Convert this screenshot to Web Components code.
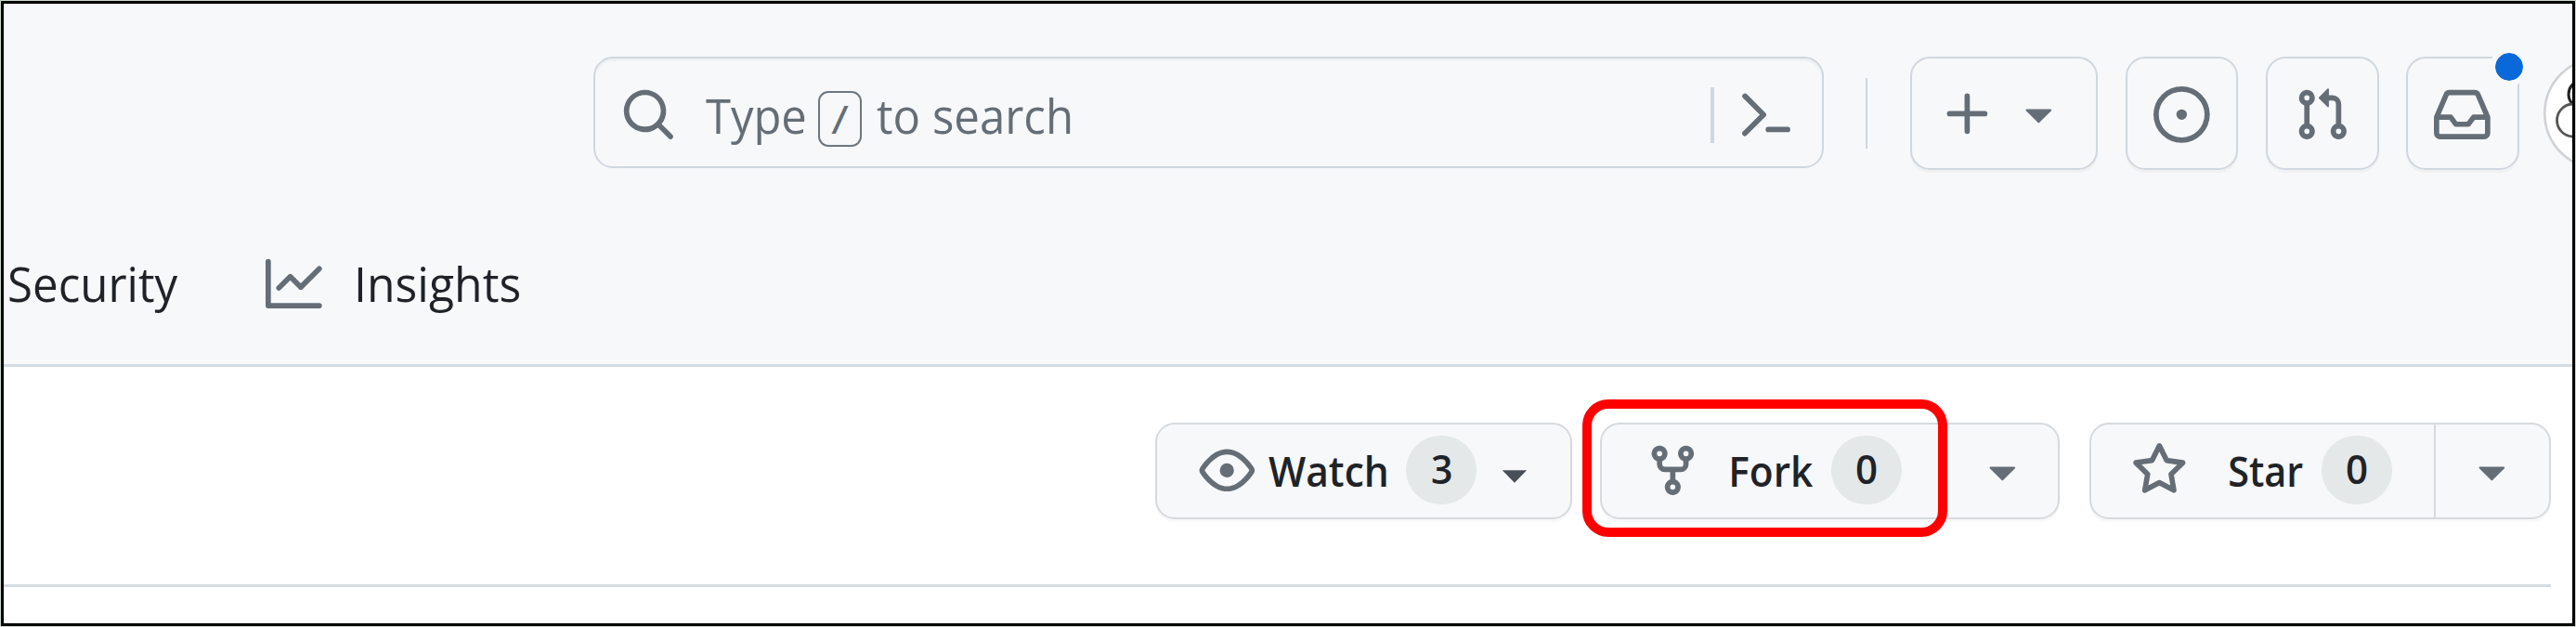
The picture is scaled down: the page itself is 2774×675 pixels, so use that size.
<!DOCTYPE html>
<html lang="en">
<head>
<meta charset="utf-8">
<title>Repository</title>
<style>
html,body{margin:0;padding:0;background:#fff}
body{width:2774px;height:675px;overflow:hidden;font-family:"Open Sans","Noto Sans",sans-serif;color:#1f2328}
</style>
</head>
<body>
<repo-page></repo-page>
<script>
const define = (name, html, setup) => {
  const t = document.createElement('template');
  t.innerHTML = html;
  customElements.define(name, class extends HTMLElement {
    connectedCallback() {
      if (this.shadowRoot) return;
      this.attachShadow({mode: 'open'}).append(t.content.cloneNode(true));
      if (setup) setup.call(this, this.shadowRoot);
    }
  });
};

const ICONS = {
  graph: 'M1.5 1.75V13.5h13.75a.75.75 0 0 1 0 1.5H.75a.75.75 0 0 1-.75-.75V1.75a.75.75 0 0 1 1.5 0Zm14.28 2.53-5.25 5.25a.75.75 0 0 1-1.06 0L7 7.06 4.28 9.78a.751.751 0 0 1-1.042-.018.751.751 0 0 1-.018-1.042l3.25-3.25a.75.75 0 0 1 1.06 0L10 7.94l4.72-4.72a.751.751 0 0 1 1.042.018.751.751 0 0 1 .018 1.042Z',
  search: 'M10.68 11.74a6 6 0 0 1-7.922-8.982 6 6 0 0 1 8.982 7.922l3.04 3.04a.749.749 0 0 1-.326 1.275.749.749 0 0 1-.734-.215ZM11.5 7a4.499 4.499 0 1 0-8.997 0A4.499 4.499 0 0 0 11.5 7Z',
  terminal: 'm6.354 8.04-4.773 4.773a.75.75 0 1 0 1.061 1.06L7.945 8.57a.75.75 0 0 0 0-1.06L2.642 2.206a.75.75 0 0 0-1.06 1.061L6.353 8.04ZM8.75 11.5a.75.75 0 0 0 0 1.5h5.5a.75.75 0 0 0 0-1.5h-5.5Z',
  plus: 'M7.75 2a.75.75 0 0 1 .75.75V7h4.25a.75.75 0 0 1 0 1.5H8.5v4.25a.75.75 0 0 1-1.5 0V8.5H2.75a.75.75 0 0 1 0-1.5H7V2.75A.75.75 0 0 1 7.75 2Z',
  caret: 'm4.427 7.427 3.396 3.396a.25.25 0 0 0 .354 0l3.396-3.396A.25.25 0 0 0 11.396 7H4.604a.25.25 0 0 0-.177.427Z',
  issue: 'M8 9.5a1.5 1.5 0 1 0 0-3 1.5 1.5 0 0 0 0 3ZM8 0a8 8 0 1 1 0 16A8 8 0 0 1 8 0ZM1.5 8a6.5 6.5 0 1 0 13 0 6.5 6.5 0 0 0-13 0Z',
  pull: 'M1.5 3.25a2.25 2.25 0 1 1 3 2.122v5.256a2.251 2.251 0 1 1-1.5 0V5.372A2.25 2.25 0 0 1 1.5 3.25Zm5.677-.177L9.573.677A.25.25 0 0 1 10 .854V2.5h1A2.5 2.5 0 0 1 13.5 5v5.628a2.251 2.251 0 1 1-1.5 0V5a1 1 0 0 0-1-1h-1v1.646a.25.25 0 0 1-.427.177L7.177 3.427a.25.25 0 0 1 0-.354ZM3.75 2.5a.75.75 0 1 0 0 1.5.75.75 0 0 0 0-1.5Zm0 9.5a.75.75 0 1 0 0 1.5.75.75 0 0 0 0-1.5Zm8.25.75a.75.75 0 1 0 1.5 0 .75.75 0 0 0-1.5 0Z',
  inbox: 'M2.8 2.06A1.75 1.75 0 0 1 4.41 1h7.18c.7 0 1.333.417 1.61 1.06l2.74 6.395c.04.093.06.194.06.295v4.5A1.75 1.75 0 0 1 14.25 15H1.75A1.75 1.75 0 0 1 0 13.25v-4.5c0-.101.02-.202.06-.295Zm1.61.44a.25.25 0 0 0-.23.152L1.887 8H4.75a.75.75 0 0 1 .6.3L6.625 10h2.75l1.275-1.7a.75.75 0 0 1 .6-.3h2.863L11.82 2.652a.25.25 0 0 0-.23-.152Zm10.09 7h-2.875l-1.275 1.7a.75.75 0 0 1-.6.3h-3.5a.75.75 0 0 1-.6-.3L4.375 9.5H1.5v3.75c0 .138.112.25.25.25h12.5a.25.25 0 0 0 .25-.25Z',
  eye: 'M8 2c1.981 0 3.671.992 4.933 2.078 1.27 1.091 2.187 2.345 2.637 3.023a1.62 1.62 0 0 1 0 1.798c-.45.678-1.367 1.932-2.637 3.023C11.67 13.008 9.981 14 8 14c-1.981 0-3.671-.992-4.933-2.078C1.797 10.83.88 9.576.43 8.898a1.62 1.62 0 0 1 0-1.798c.45-.677 1.367-1.931 2.637-3.022C4.33 2.992 6.019 2 8 2ZM1.679 7.932a.12.12 0 0 0 0 .136c.411.622 1.241 1.75 2.366 2.717C5.176 11.758 6.527 12.5 8 12.5c1.473 0 2.825-.742 3.955-1.715 1.124-.967 1.954-2.096 2.366-2.717a.12.12 0 0 0 0-.136c-.412-.621-1.242-1.75-2.366-2.717C10.824 4.242 9.473 3.5 8 3.5c-1.473 0-2.825.742-3.955 1.715-1.124.967-1.954 2.096-2.366 2.717ZM8 10a2 2 0 1 1-.001-3.999A2 2 0 0 1 8 10Z',
  fork: 'M5 5.372v.878c0 .414.336.75.75.75h4.5a.75.75 0 0 0 .75-.75v-.878a2.25 2.25 0 1 1 1.5 0v.878a2.25 2.25 0 0 1-2.25 2.25h-1.5v2.128a2.251 2.251 0 1 1-1.5 0V8.5h-1.5A2.25 2.25 0 0 1 3.5 6.25v-.878a2.25 2.25 0 1 1 1.5 0ZM5 3.25a.75.75 0 1 0-1.5 0 .75.75 0 0 0 1.5 0Zm6.75.75a.75.75 0 1 0 0-1.5.75.75 0 0 0 0 1.5Zm-3 8.75a.75.75 0 1 0-1.5 0 .75.75 0 0 0 1.5 0Z',
  star: 'M8 .25a.75.75 0 0 1 .673.418l1.882 3.815 4.21.612a.75.75 0 0 1 .416 1.279l-3.046 2.97.719 4.192a.751.751 0 0 1-1.088.791L8 12.347l-3.766 1.98a.75.75 0 0 1-1.088-.79l.72-4.194L.818 6.374a.75.75 0 0 1 .416-1.28l4.21-.611L7.327.668A.75.75 0 0 1 8 .25Zm0 2.445L6.615 5.5a.75.75 0 0 1-.564.41l-3.097.45 2.24 2.184a.75.75 0 0 1 .216.664l-.528 3.084 2.769-1.456a.75.75 0 0 1 .698 0l2.77 1.456-.53-3.084a.75.75 0 0 1 .216-.664l2.24-2.183-3.096-.45a.75.75 0 0 1-.564-.41L8 2.694Z'
};

define('oct-icon', `<style>:host{display:block;flex:none;width:60.7px;height:60.7px;color:#656d76}svg{display:block;width:100%;height:100%;overflow:visible}</style>
<svg viewBox="0 0 16 16" fill="currentColor" aria-hidden="true"><path fill-rule="evenodd"/></svg>`, function (r) {
  r.querySelector('path').setAttribute('d', ICONS[this.getAttribute('name')]);
});

/* A label whose inked width is exactly its "w" attribute. */
define('ink-text', `<style>:host{display:block;flex:none;line-height:70px;height:70px;white-space:nowrap}span{display:inline-block;transform-origin:0 50%}</style><span></span>`, function (r) {
  const s = r.querySelector('span'), w = +this.getAttribute('w');
  s.textContent = this.getAttribute('label');
  this.style.width = w + 'px';
  const cs = getComputedStyle(this), c = document.createElement('canvas').getContext('2d');
  c.font = `${cs.fontWeight} ${cs.fontSize} ${cs.fontFamily}`;
  const m = c.measureText(s.textContent);
  const k = w / (m.actualBoundingBoxLeft + m.actualBoundingBoxRight);
  s.style.transform = `scaleX(${k}) translateX(${m.actualBoundingBoxLeft}px)`;
});

define('search-box', `<style>
:host{display:flex;flex:none;align-items:center;box-sizing:border-box;width:1324.5px;height:120px;padding-top:5px;border:2px solid #d0d7de;border-radius:21px;box-shadow:inset 0 3px 0 rgba(208,215,222,.2);font-size:51px;color:#656d76}
kbd{display:flex;flex:none;align-items:center;box-sizing:border-box;width:46.3px;height:60px;margin:8px 0 0 15.4px;border:2px solid #6e7781;border-radius:11px;font:42px "Open Sans",sans-serif}
i{flex:none;width:4px;height:60px;margin-left:689.3px;background:#d0d7de}
</style>
<oct-icon name="search" style="margin-left:27.2px"></oct-icon>
<ink-text label="Type" w="106.3" style="margin-left:30.9px"></ink-text>
<kbd><ink-text label="/" w="18.5" style="margin-left:12px"></ink-text></kbd>
<ink-text label="to search" w="208.9" style="margin-left:16.1px"></ink-text>
<i></i>
<oct-icon name="terminal" style="margin-left:25px;margin-top:-1px"></oct-icon>`);

define('header-button', `<style>
:host{position:relative;display:flex;flex:none;align-items:center;justify-content:center;box-sizing:border-box;width:121.5px;height:122px;padding-top:3px;border:2px solid #d0d7de;border-radius:21px;box-shadow:0 3px 0 rgba(31,35,40,.03)}
</style><slot></slot>`);

define('unread-dot', `<style>:host{position:absolute;top:-12px;right:-12px;width:30px;height:30px;border:6px solid #f6f8fa;border-radius:50%;background:#0969da;background-clip:padding-box}</style>`);

define('user-avatar', `<style>:host{display:block;flex:none;width:122px;height:122px;margin-left:26px}svg{display:block}</style>
<svg width="122" height="122" viewBox="0 0 122 122" fill="none">
<circle cx="61" cy="61" r="59.7" fill="#fff" stroke="#d0d2d5" stroke-width="2.6"/>
<ellipse cx="40" cy="40.5" rx="13" ry="14" stroke="#222" stroke-width="3"/>
<circle cx="32" cy="68.5" r="17.5" fill="#fff" stroke="#555" stroke-width="2.8"/></svg>`);

define('page-header', `<style>
:host{display:block;box-sizing:border-box;height:391px;background:#f6f8fa;border-bottom:3px solid #d4dbe2}
.bar{display:flex;align-items:flex-start;height:122px;padding:57px 0 0 635px}
.rule{flex:none;width:2px;height:76px;margin:23px 0 0 45.5px;background:#d0d7de}
nav{display:flex;align-items:center;box-sizing:border-box;height:209px;padding:35px 0 0 5.6px;font-size:51px}
</style>
<div class="bar">
<search-box></search-box><span class="rule"></span>
<header-button style="width:202px;margin-left:46px;justify-content:flex-start"><oct-icon name="plus" style="margin-left:30.4px"></oct-icon><oct-icon name="caret" style="margin:-5px 0 0 14.7px"></oct-icon></header-button>
<header-button style="margin-left:29.5px"><oct-icon name="issue"></oct-icon></header-button>
<header-button style="margin-left:30px"><oct-icon name="pull"></oct-icon></header-button>
<header-button style="margin-left:29.5px"><oct-icon name="inbox"></oct-icon><unread-dot></unread-dot></header-button>
<user-avatar></user-avatar>
</div>
<nav>
<ink-text label="Security" w="181.5"></ink-text>
<oct-icon name="graph" style="margin-left:94.8px"></oct-icon>
<ink-text label="Insights" w="174.9" style="margin-left:38px"></ink-text>
</nav>`);

define('action-button', `<style>
:host{position:relative;display:flex;flex:none;align-items:center;box-sizing:border-box;height:104px;border:2px solid #d7dadd;border-radius:21px;background:#f6f8fa;box-shadow:0 3px 0 rgba(31,35,40,.03);font-size:44.5px;font-weight:600}
</style><slot></slot>`);

define('count-badge', `<style>:host{display:flex;flex:none;align-items:center;justify-content:center;width:76px;height:74px;margin-top:-2px;border-radius:37px;background:#e4e8e9;font-size:44px;font-weight:600}ink-text{margin-top:-4px}</style>`, function (r) {
  const t = document.createElement('ink-text');
  t.setAttribute('label', this.getAttribute('value'));
  t.setAttribute('w', this.getAttribute('w'));
  r.append(t);
});

define('split-rule', `<style>:host{display:block;flex:none;width:2px;align-self:stretch;background:#d7dadd}</style>`);
define('down-arrow', `<style>:host{display:block;flex:none;width:26.4px;height:13.6px;margin-top:12px;background:#484f56;clip-path:polygon(0 0,100% 0,50% 100%)}</style>`);
define('focus-frame', `<style>:host{position:absolute;box-sizing:border-box;left:-21px;top:-27px;width:393px;height:148px;border:10px solid #f00;border-radius:28px}</style>`);

define('repo-actions', `<style>
:host{display:flex;align-items:flex-start;box-sizing:border-box;height:237px;margin-right:23px;padding:60px 0 0 1240px;border-bottom:3px solid #d5dce2}
oct-icon{margin-top:-1px}
</style>
<action-button style="width:449px"><oct-icon name="eye" style="margin-left:45.2px"></oct-icon><ink-text label="Watch" w="126.6" style="margin-left:14.4px"></ink-text><count-badge value="3" w="20.5" style="margin-left:20.9px"></count-badge><down-arrow style="margin-left:28px"></down-arrow></action-button>
<action-button style="width:495px;margin-left:30px"><oct-icon name="fork" style="margin-left:45.6px"></oct-icon><ink-text label="Fork" w="87.7" style="margin-left:33.6px"></ink-text><count-badge value="0" w="22" style="margin-left:19.8px"></count-badge><split-rule style="margin-left:41.8px"></split-rule><oct-icon name="caret" style="margin-left:33.5px"></oct-icon><focus-frame></focus-frame></action-button>
<action-button style="width:497px;margin-left:32px"><oct-icon name="star" style="margin-left:43.2px"></oct-icon><ink-text label="Star" w="79" style="margin-left:45.2px"></ink-text><count-badge value="0" w="22" style="margin-left:19.5px"></count-badge><split-rule style="margin-left:45.5px"></split-rule><oct-icon name="caret" style="margin-left:29.5px"></oct-icon></action-button>`);

define('repo-page', `<style>
:host{display:block;box-sizing:border-box;width:2774px;height:675px;border:1px solid #cdd5cf}
main{box-sizing:border-box;height:673px;border:3px solid #000;overflow:hidden;background:#fff}
</style><main><page-header></page-header><repo-actions></repo-actions></main>`);
</script>
</body>
</html>
